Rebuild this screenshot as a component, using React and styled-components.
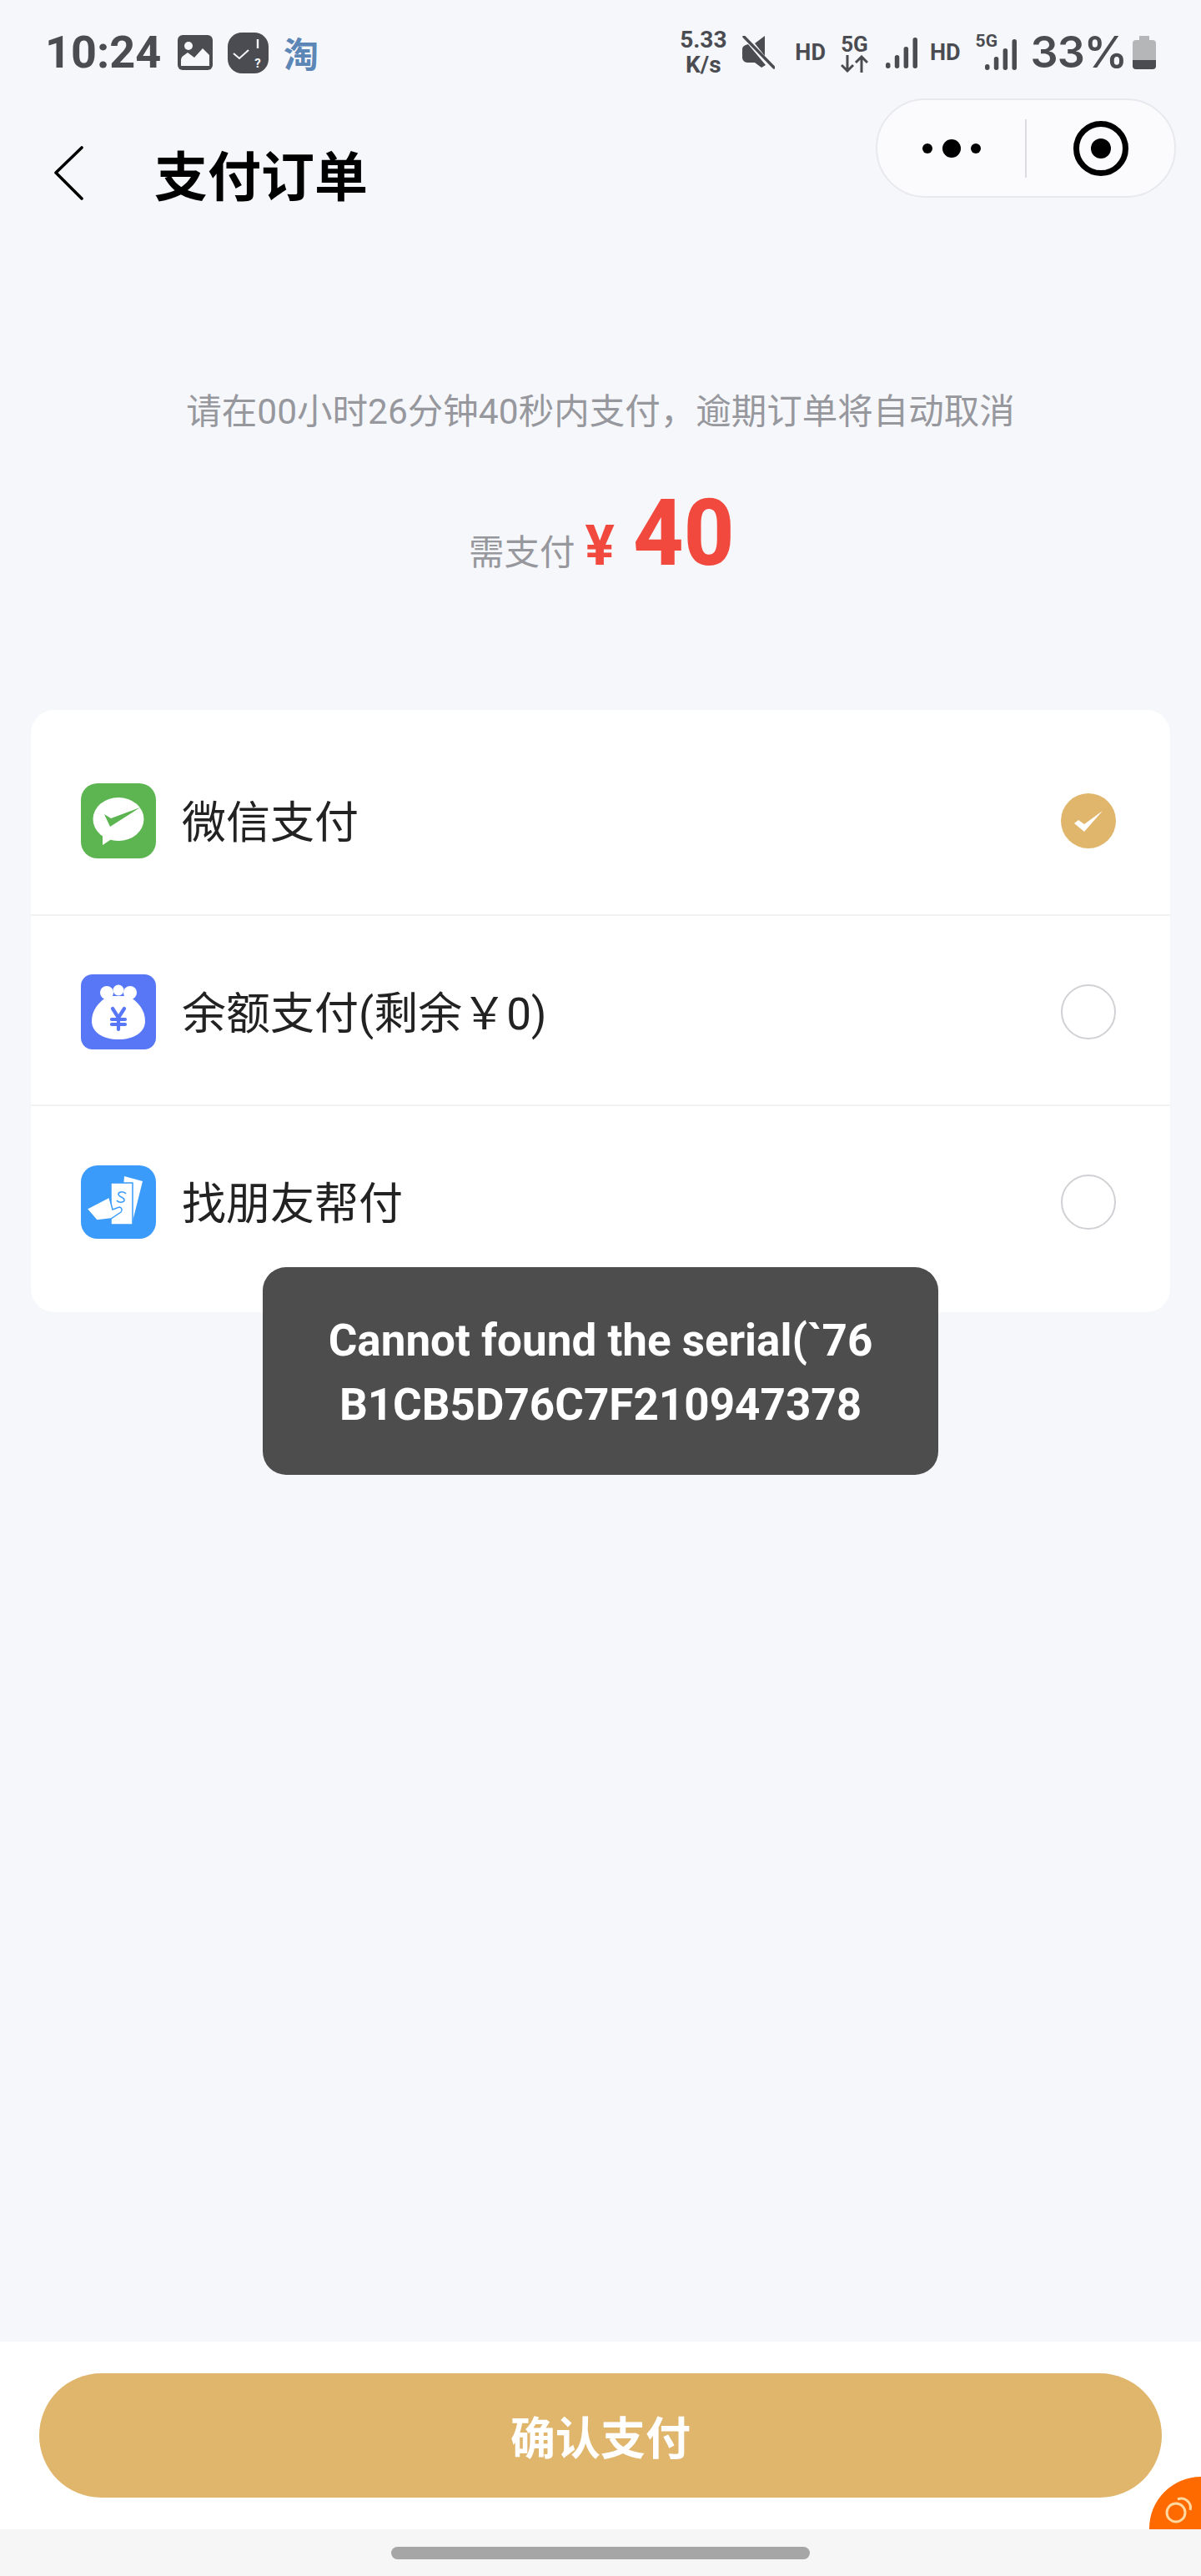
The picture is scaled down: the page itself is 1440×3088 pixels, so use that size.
import React from "react";
import styled, { createGlobalStyle } from "styled-components";

const STATUS = "#4a4c52";
const GOLD = "#e0b56c";
const BG = "#f6f7fb";
const CJK = `Roboto, "Noto Sans CJK SC", sans-serif`;

const GlobalStyle = createGlobalStyle`
  html, body {
    margin: 0;
    padding: 0;
    background: ${BG};
  }
  * {
    box-sizing: border-box;
  }
`;

const Page = styled.div`
  position: relative;
  width: 1440px;
  height: 3088px;
  display: flex;
  flex-direction: column;
  overflow: hidden;
  background: ${BG};
  font-family: ${CJK};
`;

const StatusBar = styled.div`
  height: 118px;
  padding: 8px 54px 0 54px;
  display: flex;
  align-items: center;
  justify-content: space-between;
  color: ${STATUS};
`;
const StatusGroup = styled.div`
  display: flex;
  align-items: center;
`;
const Slot = styled.div`
  display: flex;
  flex-direction: column;
  align-items: center;
  flex: none;
  margin-left: ${(p) => p.$gap || 0}px;
`;
const Time = styled.span`
  font-size: 54px;
  line-height: 54px;
  font-weight: 700;
  width: 135px;
`;
const TaoMark = styled.span`
  font-size: 42px;
  line-height: 48px;
  font-weight: 700;
  color: #5b86b5;
  font-family: "Noto Sans CJK SC", sans-serif;
`;
const Speed = styled.span`
  width: 58px;
  font-size: 28px;
  line-height: 30px;
  font-weight: 700;
  text-align: center;
`;
const Tiny = styled.span`
  font-size: ${(p) => p.$size || 27}px;
  line-height: ${(p) => p.$size || 27}px;
  font-weight: 700;
`;
const Percent = styled.span`
  font-family: Inter, sans-serif;
  font-size: 52px;
  line-height: 54px;
  font-weight: 600;
  letter-spacing: -1px;
`;
const SignalWrap = styled.div`
  position: relative;
  width: 49px;
  height: 42px;
  display: flex;
  justify-content: flex-end;
  align-items: flex-end;
`;
const SignalBadge = styled.span`
  position: absolute;
  left: 0;
  top: -3px;
  font-size: 21px;
  line-height: 21px;
  font-weight: 700;
`;

const Nav = styled.div`
  height: 178px;
  padding: 0 30px 0 65px;
  display: flex;
  align-items: center;
`;
const Title = styled.h1`
  margin: 0 0 0 85px;
  font-family: "Noto Sans CJK SC", sans-serif;
  font-size: 64px;
  line-height: 80px;
  font-weight: 700;
  color: #000;
`;
const Capsule = styled.div`
  align-self: flex-start;
  margin-left: auto;
  width: 360px;
  height: 119px;
  border: 2px solid #e8e9ed;
  border-radius: 60px;
  background: #fbfbfd;
  display: flex;
  align-items: center;
`;
const CapsulePart = styled.div`
  flex: 1;
  display: flex;
  justify-content: center;
  align-items: center;
`;
const CapsuleLine = styled.div`
  width: 2px;
  height: 70px;
  background: #dcdce0;
`;

const Notice = styled.p`
  margin: 168px 0 0;
  text-align: center;
  font-size: 42.5px;
  line-height: 60px;
  color: #97989d;
`;
const Amount = styled.div`
  margin-top: 60px;
  height: 110px;
  display: flex;
  justify-content: center;
  align-items: baseline;
`;
const AmountLabel = styled.span`
  font-size: 42.5px;
  line-height: 110px;
  color: #97989d;
`;
const Yen = styled.span`
  margin-left: 12px;
  font-size: 66px;
  line-height: 110px;
  font-weight: 700;
  color: #f2493f;
`;
const Price = styled.span`
  margin: 0 -10px 0 22px;
  font-size: 112px;
  line-height: 110px;
  font-weight: 800;
  color: #f2493f;
  display: inline-block;
  transform: scaleX(0.94);
  transform-origin: left center;
`;

const Card = styled.div`
  margin: 157px 0 0 37px;
  width: 1366px;
  padding: 17px 0 21px;
  background: #fff;
  border-radius: 28px;
`;
const Row = styled.div`
  height: 228px;
  padding: 4px 65px 0 60px;
  display: flex;
  align-items: center;
  gap: 31px;
  border-top: ${(p) => (p.$first ? "none" : "2px solid #f0f1f3")};
`;
const RowLabel = styled.span`
  padding-top: 6px;
  font-size: 53px;
  line-height: 70px;
  color: #222;
`;
const Radio = styled.div`
  margin-left: auto;
  width: 66px;
  height: 66px;
  border-radius: 50%;
  border: ${(p) => (p.$on ? "none" : "2px solid #d0d1d4")};
  background: ${(p) => (p.$on ? GOLD : "transparent")};
  display: flex;
  align-items: center;
  justify-content: center;
`;

const Toast = styled.div`
  position: absolute;
  left: 315px;
  top: 1519px;
  width: 810px;
  height: 249px;
  padding-top: 4px;
  border-radius: 28px;
  background: #4d4d4d;
  color: #fff;
  display: flex;
  flex-direction: column;
  align-items: center;
  justify-content: center;
  font-size: 53px;
  line-height: 77px;
  font-weight: 700;
`;

const Footer = styled.div`
  position: relative;
  margin-top: auto;
  height: 225px;
  padding: 38px 47px 0;
  background: #fff;
`;
const ConfirmButton = styled.button`
  display: block;
  width: 100%;
  height: 149px;
  padding: 0;
  border: none;
  border-radius: 75px;
  background: ${GOLD};
  color: #fff;
  font-family: "Noto Sans CJK SC", sans-serif;
  font-size: 54px;
  font-weight: 700;
`;
const FloatBadge = styled.div`
  position: absolute;
  right: 0;
  bottom: 0;
  width: 62px;
  height: 63px;
  border-radius: 62px 0 0 0;
  background: #ff6a00;
`;
const HomeArea = styled.div`
  height: 56px;
  padding-top: 21px;
  background: #f6f6f7;
  display: flex;
  justify-content: center;
`;
const HomeBar = styled.div`
  width: 502px;
  height: 15px;
  border-radius: 8px;
  background: #a6a6a6;
`;

const ImageIcon = () => (
  <svg width="42" height="42" viewBox="0 0 42 42">
    <rect width="42" height="42" rx="6" fill={STATUS} />
    <circle cx="13" cy="13" r="5" fill={BG} />
    <path d="M4 37v-7c0-3 2-5 4-6l4-3 8 6 10-11 8 8v13z" fill={BG} />
  </svg>
);

const TaskIcon = () => (
  <svg width="49" height="49" viewBox="0 0 49 49">
    <rect width="49" height="49" rx="17" fill={STATUS} />
    <path d="M7 25l7 6 11-10" fill="none" stroke={BG} strokeWidth="2" />
    <path d="M36 8v11" stroke={BG} strokeWidth="2.4" />
    <text x="36" y="42" textAnchor="middle" fontSize="15" fontWeight="700" fontFamily="Roboto" fill={BG}>?</text>
  </svg>
);

const MuteIcon = () => (
  <svg width="39" height="40" viewBox="0 0 39 40">
    <path d="M0 16c0-3 2-4 4-5l3-1 21 25-5 3-8-6H6c-3 0-6-3-6-6z" fill={STATUS} />
    <path d="M15 9l12-9v24z" fill={STATUS} />
    <path d="M2 1l36 37" stroke={STATUS} strokeWidth="3.4" strokeLinecap="round" />
  </svg>
);

const SignalIcon = () => (
  <svg width="38" height="37" viewBox="0 0 38 37">
    <rect x="0" y="30" width="5.5" height="7" rx="2.7" fill={STATUS} />
    <rect x="10.8" y="21" width="5.5" height="16" rx="2.7" fill={STATUS} />
    <rect x="21.6" y="11" width="5.5" height="26" rx="2.7" fill={STATUS} />
    <rect x="32.5" y="0" width="5.5" height="37" rx="2.7" fill={STATUS} />
  </svg>
);

const ArrowsIcon = () => (
  <svg width="33" height="21" viewBox="0 0 33 21">
    <g fill="none" stroke={STATUS} strokeWidth="3">
      <path d="M8 0v19M1 12l7 7 7-7" />
      <path d="M25 21V2M18 9l7-7 7 7" />
    </g>
  </svg>
);

const BatteryIcon = () => (
  <svg width="28" height="40" viewBox="0 0 28 40">
    <path d="M8 0h12v5h4a4 4 0 0 1 4 4v20H0V9a4 4 0 0 1 4-4h4z" fill="#b5b6b8" />
    <path d="M0 29h28v7a4 4 0 0 1-4 4H4a4 4 0 0 1-4-4z" fill={STATUS} />
  </svg>
);

const WechatIcon = () => (
  <svg width="90" height="90" viewBox="0 0 90 90">
    <rect width="90" height="90" rx="20" fill="#5cb551" />
    <ellipse cx="45" cy="43" rx="30.5" ry="26" fill="#fff" />
    <path d="M26 62l0 12 12-8z" fill="#fff" />
    <path d="M28 37l8 5 35-13-36 23z" fill="#5cb551" />
  </svg>
);

const BagIcon = () => (
  <svg width="90" height="90" viewBox="0 0 90 90">
    <rect width="90" height="90" rx="14" fill="#5877f6" />
    <circle cx="31" cy="22" r="8" fill="#fff" />
    <circle cx="45" cy="19" r="6.5" fill="#fff" />
    <circle cx="59" cy="22" r="8" fill="#fff" />
    <path d="M33 26h24c12 7 20 17 20 30 0 14-14 22-32 22S13 70 13 56c0-13 8-23 20-30z" fill="#fff" />
    <path d="M38 41l7 11 7-11M45 52v14M37 54h16M37 60h16" fill="none" stroke="#5877f6" strokeWidth="4.2" strokeLinecap="round" />
  </svg>
);

const HandCashIcon = () => (
  <svg width="90" height="88" viewBox="0 0 90 88">
    <rect width="90" height="88" rx="20" fill="#3a9bfa" />
    <path d="M52 13l22 6-12 48-6-2 4-37-9-2z" fill="#fff" />
    <rect x="36" y="21" width="26" height="50" fill="#fff" stroke="#3a9bfa" strokeWidth="1.5" />
    <path d="M54 34c-2-3-8-3-9 0-1 4 8 4 7 8-1 3-7 3-9 0" fill="none" stroke="#3a9bfa" strokeWidth="1.6" />
    <path d="M7 52l27-14 4 15 8-3c3 0 4 4 2 6L36 64 19 66z" fill="#fff" stroke="#3a9bfa" strokeWidth="1.5" />
  </svg>
);

const methods = [
  { label: "微信支付", Icon: WechatIcon, on: true },
  { label: "余额支付(剩余￥0)", Icon: BagIcon },
  { label: "找朋友帮付", Icon: HandCashIcon },
];

export default function App() {
  return (
    <Page>
      <GlobalStyle />
      <StatusBar>
        <StatusGroup>
          <Time>10:24</Time>
          <Slot $gap={24}><ImageIcon /></Slot>
          <Slot $gap={18}><TaskIcon /></Slot>
          <Slot $gap={18}><TaoMark>淘</TaoMark></Slot>
        </StatusGroup>
        <StatusGroup>
          <Speed>5.33<br />K/s</Speed>
          <Slot $gap={18}><MuteIcon /></Slot>
          <Slot $gap={24}><Tiny>HD</Tiny></Slot>
          <Slot $gap={18}>
            <Tiny $size={26}>5G</Tiny>
            <ArrowsIcon />
          </Slot>
          <Slot $gap={21}><SignalIcon /></Slot>
          <Slot $gap={15}><Tiny>HD</Tiny></Slot>
          <Slot $gap={18}>
            <SignalWrap>
              <SignalBadge>5G</SignalBadge>
              <SignalIcon />
            </SignalWrap>
          </Slot>
          <Slot $gap={17}><Percent>33%</Percent></Slot>
          <Slot $gap={7}><BatteryIcon /></Slot>
        </StatusGroup>
      </StatusBar>

      <Nav>
        <svg width="35" height="65" viewBox="0 0 35 65">
          <path d="M33 2L2 32l31 31" fill="none" stroke="#000" strokeWidth="3.6" strokeLinecap="round" strokeLinejoin="round" />
        </svg>
        <Title>支付订单</Title>
        <Capsule>
          <CapsulePart>
            <svg width="70" height="24" viewBox="0 0 70 24">
              <circle cx="6" cy="12" r="6" fill="#000" />
              <circle cx="35" cy="12" r="11" fill="#000" />
              <circle cx="64" cy="12" r="6" fill="#000" />
            </svg>
          </CapsulePart>
          <CapsuleLine />
          <CapsulePart>
            <svg width="66" height="66" viewBox="0 0 66 66">
              <circle cx="33" cy="33" r="29.5" fill="none" stroke="#000" strokeWidth="7" />
              <circle cx="33" cy="33" r="12" fill="#000" />
            </svg>
          </CapsulePart>
        </Capsule>
      </Nav>

      <Notice>请在00小时26分钟40秒内支付，逾期订单将自动取消</Notice>
      <Amount>
        <AmountLabel>需支付</AmountLabel>
        <Yen>¥</Yen>
        <Price>40</Price>
      </Amount>

      <Card>
        {methods.map(({ label, Icon, on }, i) => (
          <Row key={label} $first={i === 0}>
            <Icon />
            <RowLabel>{label}</RowLabel>
            <Radio $on={on}>
              {on && (
                <svg width="34" height="25" viewBox="0 0 34 25">
                  <path d="M0 15l5-4 7 5L34 0 12 25z" fill="#fff" />
                </svg>
              )}
            </Radio>
          </Row>
        ))}
      </Card>

      <Toast>
        <span>Cannot found the serial(`76</span>
        <span>B1CB5D76C7F210947378</span>
      </Toast>

      <Footer>
        <ConfirmButton>确认支付</ConfirmButton>
        <FloatBadge>
          <svg width="62" height="63" viewBox="0 0 62 63">
            <circle cx="32" cy="43" r="11" fill="none" stroke="#ffd9a0" strokeWidth="3" />
            <path d="M34 27a11 11 0 0 1 15 13" fill="none" stroke="#ffd9a0" strokeWidth="3" />
          </svg>
        </FloatBadge>
      </Footer>
      <HomeArea>
        <HomeBar />
      </HomeArea>
    </Page>
  );
}
